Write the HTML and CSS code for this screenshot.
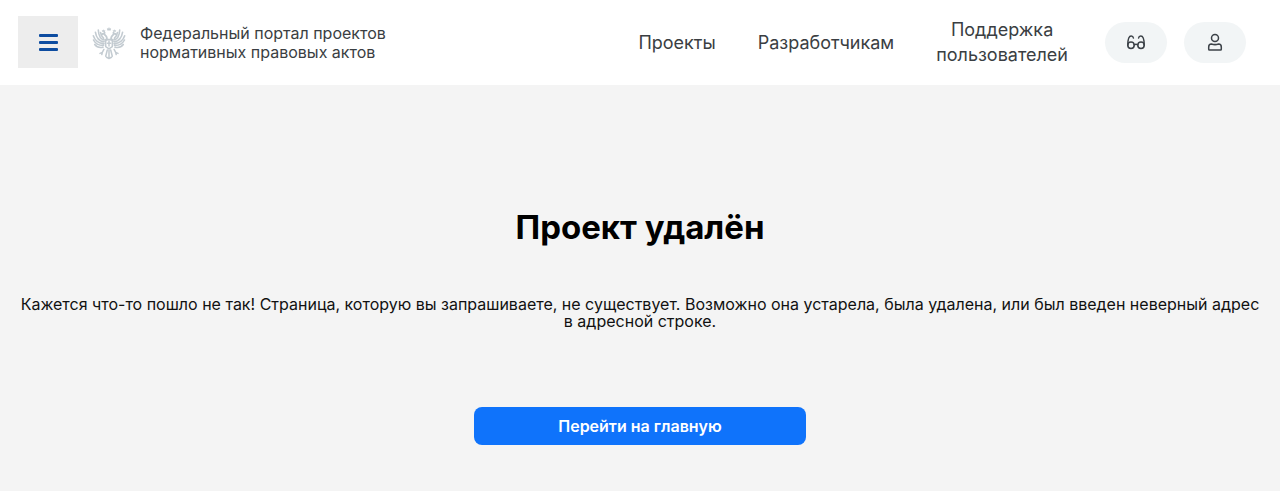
FILE: index.html
```html
<!DOCTYPE html>
<html lang="ru">
<head>
	<meta charset="UTF-8">
	<meta name="viewport" content="width=device-width, initial-scale=1">
	<title>Проект удалён</title>
	<link rel="stylesheet" href="styles.css">
</head>
<body>

	<header class="header">
		<button class="menu-button" type="button" aria-label="Меню">
			<span class="menu-line"></span>
			<span class="menu-line"></span>
			<span class="menu-line"></span>
		</button>

		<a class="logo" href="#">
			<svg class="emblem" viewBox="0 0 34 34" fill="#c3cbd1" stroke="#c3cbd1" stroke-linecap="round" stroke-linejoin="round" aria-hidden="true">
				<!-- короны -->
				<path stroke="none" d="M15.3 4.5 14.9 2l1.2.7L17 1l.9 1.7 1.2-.7-.4 2.5zM10.2 5.8 9.8 4l1.2.4.8-1.2.6 1.3 1-.3-.6 1.7zM21.2 5.8l-.6-1.6 1 .3.6-1.3.8 1.2 1.2-.4-.4 1.8z"/>
				<!-- головы -->
				<path fill="none" stroke-width="1.8" d="M14.8 14c.4-2.4-.1-3.6-1.4-4.6-1-.8-1.4-1.8-.8-2.6M12 7.4l-2.3 1M19.2 14c-.4-2.4.1-3.6 1.4-4.6 1-.8 1.4-1.8.8-2.6M22 7.4l2.3 1"/>
				<!-- крылья -->
				<path fill="none" stroke-width="1.6" d="M12.6 14C8 13.4 6.6 9.5 6.3 4M12.2 15.8C6.5 15.3 4.2 11.6 3.4 6.2M12 17.6C5.6 17.3 2.8 14.4 1.3 9.8M11.6 19.4C6.5 19.6 3.4 17.6 1.5 14M11 21.2c-3.4.8-6.4-.2-8.3-2.7M11.6 12.2C9.6 10.8 8.8 9 8.6 6.5"/>
				<path fill="none" stroke-width="1.6" d="M21.4 14C26 13.4 27.4 9.5 27.7 4M21.8 15.8C27.5 15.3 29.8 11.6 30.6 6.2M22 17.6C28.4 17.3 31.2 14.4 32.7 9.8M22.4 19.4C27.5 19.6 30.6 17.6 32.5 14M23 21.2c3.4.8 6.4-.2 8.3-2.7M22.4 12.2C24.4 10.8 25.2 9 25.4 6.5"/>
				<!-- щит, хвост и лапы -->
				<path fill="none" stroke-width="1.5" d="M13.7 13.5h6.6v7.2L17 22.8l-3.3-2.1zM17 15v5M15.5 17.2h3"/>
				<path fill="none" stroke-width="1.5" d="M17 24v7.4M15.3 24l-1.6 6.2M18.7 24l1.6 6.2M14.5 31.3 17 32.5l2.5-1.2M11.9 23.4l-1.6 3-2.3 1M10.300 26.400 9.800 28.600M22.100 23.400l1.600 3 2.300 1M23.700 26.400l.5 2.200"/>
			</svg>
			<span class="logo-text">Федеральный портал проектов<br>нормативных правовых актов</span>
		</a>

		<nav class="nav">
			<a class="nav-link" href="#">Проекты</a>
			<a class="nav-link" href="#">Разработчикам</a>
			<a class="nav-link" href="#">Поддержка<br>пользователей</a>
		</nav>

		<div class="tools">
			<button class="tool-button" type="button" aria-label="Версия для слабовидящих">
				<svg class="tool-icon" viewBox="0 0 20 20" aria-hidden="true">
					<circle cx="5" cy="13.200" r="3.200"/>
					<circle cx="15" cy="13.200" r="3.200"/>
					<path d="M8.200 12.800c1.100-.7 2.500-.7 3.600 0M1.800 13.200C1.800 8.500 2.700 4 5.200 4c1.200 0 2 .7 2.200 2M18.200 13.200C18.200 8.500 17.300 4 14.800 4c-1.200 0-2 .7-2.200 2"/>
				</svg>
			</button>
			<button class="tool-button" type="button" aria-label="Личный кабинет">
				<svg class="tool-icon" viewBox="0 0 20 20" aria-hidden="true">
					<circle cx="10" cy="6" r="3.500"/>
					<path d="M6.400 12c2.300.8 4.900.8 7.200 0 1.700 0 2.700 1.300 2.700 3v2.300c0 .5-.3.800-.8.800h-11c-.5 0-.8-.3-.8-.8v-2.300c0-1.700 1-3 2.700-3z"/>
				</svg>
			</button>
		</div>
	</header>

	<main class="content">
		<h1 class="title">Проект удалён</h1>
		<p class="description">Кажется что-то пошло не так! Страница, которую вы запрашиваете, не существует. Возможно она устарела, была удалена, или был введен неверный адрес в адресной строке.</p>
		<button class="home-button" type="button">Перейти на главную</button>
	</main>

</body>
</html>
```

FILE: styles.css
```css
:root {
	--page: #f4f4f4;
	--text: #3a3e42;
	--blue: #0f73fb;
	--menu-blue: #0d4ca0;
}

* {
	box-sizing: border-box;
}

body {
	display: flex;
	flex-direction: column;
	min-height: 100vh;
	margin: 0;
	font-family: Inter, "Liberation Sans", sans-serif;
	color: #111;
	background: var(--page);
}

button {
	padding: 0;
	border: none;
	font-family: inherit;
	cursor: pointer;
}

a {
	color: var(--text);
	text-decoration: none;
}

.header {
	display: flex;
	align-items: center;
	padding: 16px 34px 17px 18px;
	background: #fff;
}

.menu-button {
	display: flex;
	flex-direction: column;
	align-items: center;
	justify-content: center;
	gap: 4px;
	width: 60px;
	height: 52px;
	background: #ededed;
}

.menu-line {
	width: 19px;
	height: 3px;
	border-radius: 1px;
	background: var(--menu-blue);
}

.logo {
	display: flex;
	align-items: center;
	gap: 14px;
	margin-left: 14px;
	padding-top: 2px;
}

.emblem {
	width: 34px;
	height: 34px;
}

.logo-text {
	font-size: 16px;
	line-height: 19px;
}

.nav {
	display: flex;
	align-items: center;
	gap: 42px;
	margin-left: auto;
}

.nav-link {
	font-size: 18px;
	line-height: 25px;
	text-align: center;
}

.tools {
	display: flex;
	gap: 17px;
	margin-left: 37px;
}

.tool-button {
	display: flex;
	align-items: center;
	justify-content: center;
	width: 62px;
	height: 41px;
	border-radius: 21px;
	background: #f2f5f6;
}

.tool-icon {
	width: 20px;
	height: 20px;
	fill: none;
	stroke: #3c4248;
	stroke-width: 1.5;
	stroke-linecap: round;
	stroke-linejoin: round;
}

.content {
	display: flex;
	flex-direction: column;
	align-items: center;
	padding: 122px 20px 46px;
}

.title {
	margin: 0;
	font-size: 33px;
	font-weight: 700;
	line-height: 40px;
	color: #000;
}

.description {
	margin: 49px 0 77px;
	font-size: 16px;
	line-height: 17px;
	text-align: center;
}

.home-button {
	width: 332px;
	max-width: 100%;
	height: 38px;
	border-radius: 8px;
	font-size: 16px;
	font-weight: 600;
	color: #fff;
	background: var(--blue);
}
```
